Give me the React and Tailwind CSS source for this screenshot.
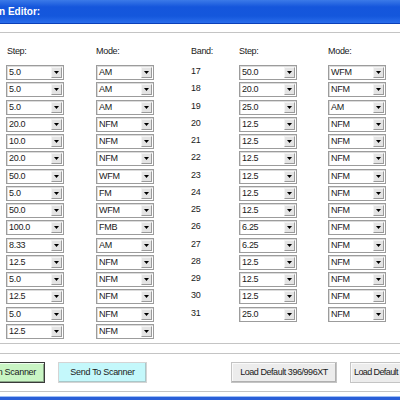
import React from "react";

const left = [
  ["5.0", "AM"], ["5.0", "AM"], ["5.0", "AM"], ["20.0", "NFM"], ["10.0", "NFM"],
  ["20.0", "NFM"], ["50.0", "WFM"], ["5.0", "FM"], ["50.0", "WFM"], ["100.0", "FMB"],
  ["8.33", "AM"], ["12.5", "NFM"], ["5.0", "NFM"], ["12.5", "NFM"], ["5.0", "NFM"], ["12.5", "NFM"],
];
const right = [
  ["50.0", "WFM"], ["20.0", "NFM"], ["25.0", "AM"], ["12.5", "NFM"], ["12.5", "NFM"],
  ["12.5", "NFM"], ["12.5", "NFM"], ["12.5", "NFM"], ["12.5", "NFM"], ["6.25", "NFM"],
  ["6.25", "NFM"], ["12.5", "NFM"], ["12.5", "NFM"], ["12.5", "NFM"], ["25.0", "NFM"],
];

function Combo({ value }) {
  return (
    <div className="flex h-[15px] w-[58px] items-center border border-[#9c9c9c] bg-white shadow-[inset_1px_1px_0_#dcdcdc]">
      <span className="flex-1 pl-[2px] leading-[13px]">{value}</span>
      <div className="mr-[1px] flex h-[11px] w-[11px] items-center justify-center border border-t-[#f4f4f4] border-l-[#f4f4f4] border-b-[#9a9a9a] border-r-[#9a9a9a] bg-[#e4e4e4]">
        <svg width="5" height="3" viewBox="0 0 5 3">
          <polygon points="0,0 5,0 2.5,3" fill="#000" />
        </svg>
      </div>
    </div>
  );
}

export default function App() {
  return (
    <div
      className="relative h-[400px] w-[400px] overflow-hidden bg-white text-[9px] tracking-[-0.3px] text-[#1a1a1a]"
      style={{ fontFamily: '"Liberation Sans", Arial, sans-serif' }}
    >
      <div className="flex h-[24px] items-center border-b border-[#0b3fb8] bg-[linear-gradient(to_bottom,#3b7ae8_0%,#1556dc_30%,#1457dc_70%,#2a6deb_100%)]">
        <span className="-ml-[1px] text-[10px] font-bold tracking-normal text-white">n Editor:</span>
      </div>
      <div className="h-[8px]" />
      <div className="border-t border-b border-[#c4c4c4] pb-[4px] pt-[13px]">
        <div className="flex h-[11px] items-center leading-[11px]">
          <span className="ml-[7px] w-[89px]">Step:</span>
          <span className="w-[95px]">Mode:</span>
          <span className="w-[48px]">Band:</span>
          <span className="w-[89px]">Step:</span>
          <span>Mode:</span>
        </div>
        <div className="mt-[8px] flex flex-col gap-[2.27px]">
          {left.map((l, i) => {
            const r = right[i];
            return (
              <div key={i} className="flex h-[15px] items-start">
                <div className="ml-[6px]">
                  <Combo value={l[0]} />
                </div>
                <div className="ml-[32px]">
                  <Combo value={l[1]} />
                </div>
                {r && (
                  <>
                    <div className="ml-[37px] w-[48px] leading-[12px]">{17 + i}</div>
                    <Combo value={r[0]} />
                    <div className="ml-[31px]">
                      <Combo value={r[1]} />
                    </div>
                  </>
                )}
              </div>
            );
          })}
        </div>
      </div>
      <div className="mt-[9px] border-t border-b border-[#c4c4c4] pb-[8px] pt-[8px]">
        <div className="flex h-[21px] items-stretch whitespace-nowrap">
          <button className="-ml-[3px] flex w-[48px] shrink-0 items-center justify-end border border-[#3a3a3a] bg-[#c9f5c4] pr-[8px] shadow-[inset_1px_1px_0_#f0fff0,inset_-1px_-1px_0_#8aa888]">
            n Scanner
          </button>
          <button className="ml-[13px] flex w-[89px] shrink-0 items-center justify-center border border-[#d4d4d4] bg-[#c4f8fb] shadow-[inset_-1px_-1px_0_#a8c8ca]">
            Send To Scanner
          </button>
          <button className="ml-[84px] flex w-[106px] shrink-0 items-center justify-center border border-[#c4c4c4] bg-[#ececec] tracking-[-0.45px] shadow-[inset_-1px_-1px_0_#b0b0b0,inset_1px_1px_0_#fafafa]">
            Load Default 396/996XT
          </button>
          <button className="ml-[13px] flex w-[106px] shrink-0 items-center justify-start border border-[#c4c4c4] bg-[#ececec] pl-[3px] tracking-[-0.6px] shadow-[inset_1px_1px_0_#fafafa]">
            Load Default
          </button>
        </div>
      </div>
      <div className="mt-[4px] h-[4px] border-t border-[#9fbef5] bg-[#2a5fd8]" />
    </div>
  );
}
